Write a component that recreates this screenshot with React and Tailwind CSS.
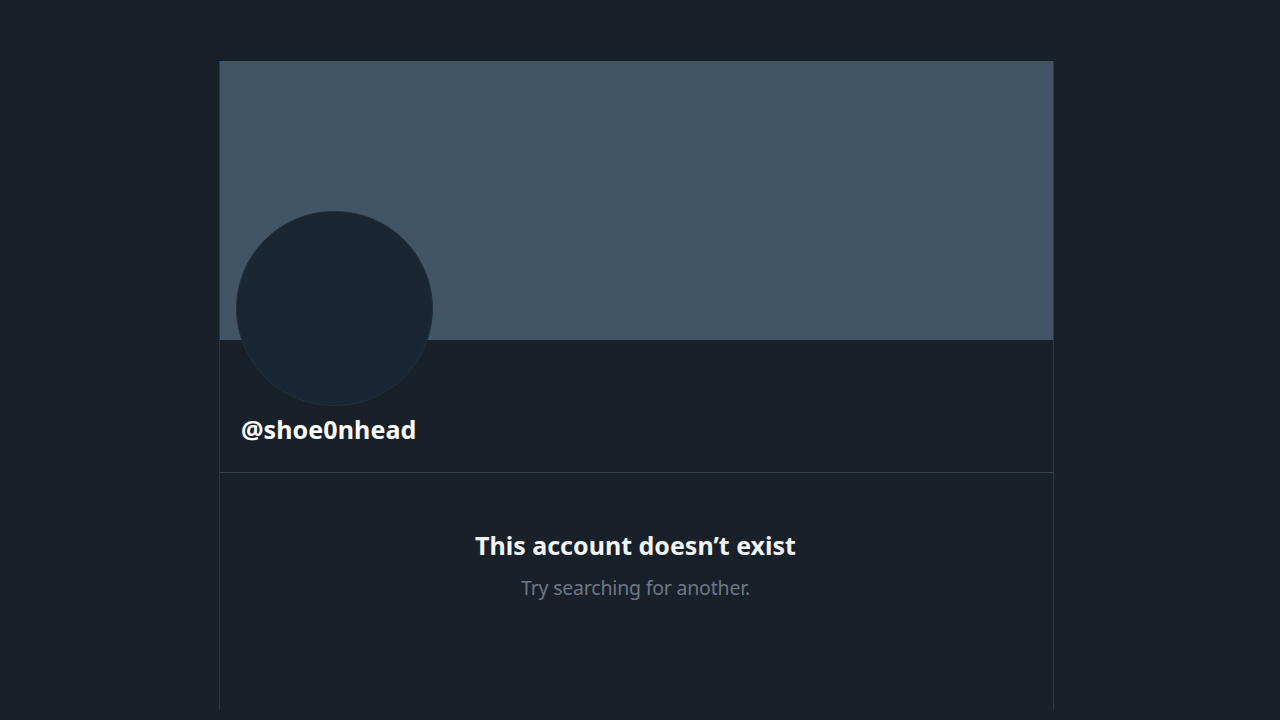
export default function App() {
  return (
    <div className="w-[1280px] h-[720px] bg-[#18202a] pl-[219px] pt-[61px] overflow-hidden" style={{ fontFamily: '"Noto Sans", "Open Sans", sans-serif' }}>
      <div className="w-[835px] h-[648px] border-x border-[#2f3942] flex flex-col">
        <div className="h-[279px] bg-[#425566] shrink-0" />
        <div className="h-[132px] relative pl-[21px] flex items-end pb-[30px]">
          <div className="absolute left-[16px] top-[-129px] w-[197px] h-[195px] rounded-full bg-[#1a2634] border border-[#22303e]" />
          <div className="text-white font-bold text-[25px] leading-none tracking-[0.1px]">@shoe0nhead</div>
        </div>
        <div className="border-t border-[#39434c] flex flex-col items-center pt-[57px] pr-[2px]">
          <div className="text-[#f2f4f5] font-bold text-[25px] leading-tight tracking-[0px]">This account doesn’t exist</div>
          <div className="text-[#6e7882] text-[19.5px] mt-[12px] tracking-[-0.2px]">Try searching for another.</div>
        </div>
      </div>
    </div>
  );
}
